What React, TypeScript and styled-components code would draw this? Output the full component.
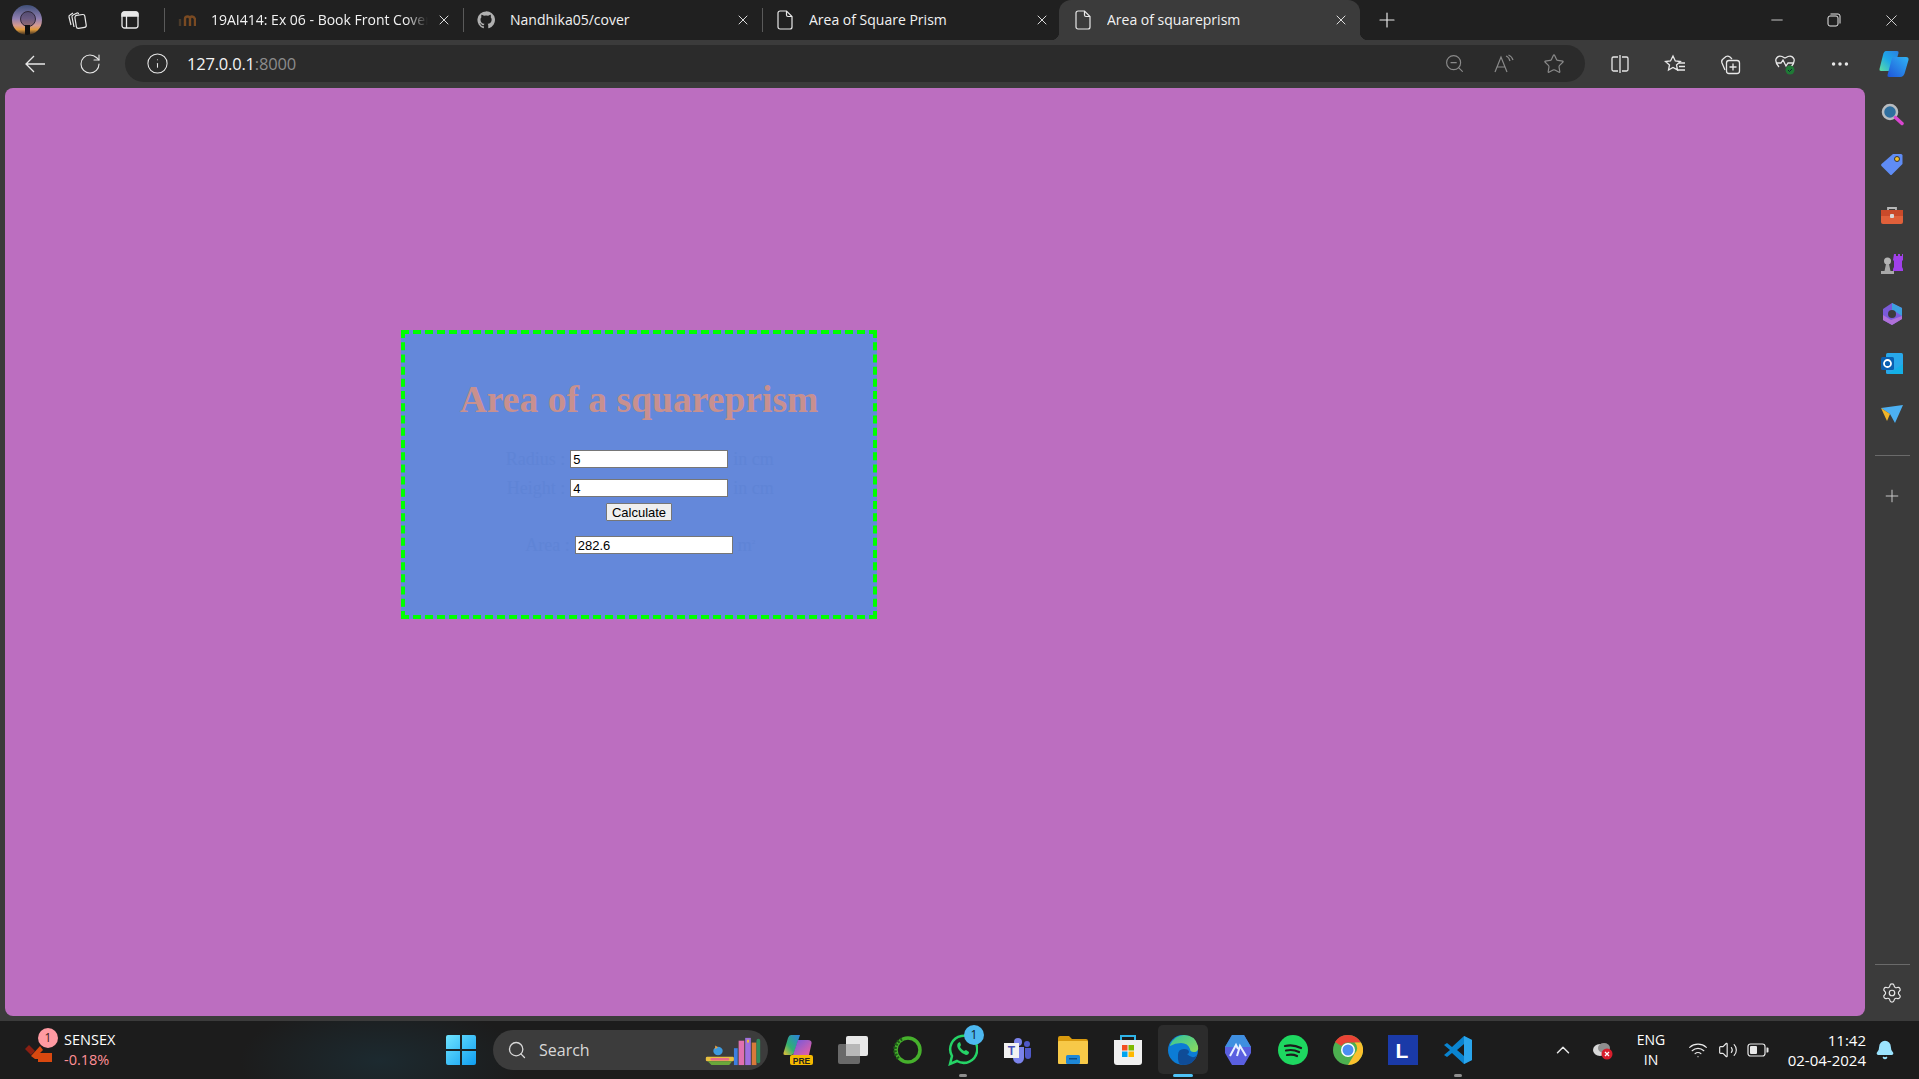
import React from 'react';
import styled, { createGlobalStyle } from 'styled-components';
import {
  Bell,
  ChevronUp,
  Info,
  Minus,
  MoreHorizontal,
  Plus,
  RotateCw,
  Search,
  Settings,
  Star,
  Volume2,
  Wifi,
  X,
  ZoomOut,
} from 'lucide-react';

const GlobalStyle = createGlobalStyle`
  html, body { margin: 0; padding: 0; height: 100%; overflow: hidden; }
  body { font-family: "Open Sans", "Noto Sans", sans-serif; background: #3b3b3b; color: #fff; }
`;

const Screen = styled.div`
  display: flex;
  flex-direction: column;
  width: 1919px;
  height: 1079px;
  overflow: hidden;
`;

/* ---- title bar ---- */
const TabStrip = styled.div`
  display: flex;
  align-items: center;
  height: 40px;
  flex: none;
  padding-left: 3px;
  background: #202020;
`;

const Slot = styled.div<{ $w: number; $h?: number; $color?: string }>`
  flex: none;
  display: flex;
  align-items: center;
  justify-content: center;
  width: ${p => p.$w}px;
  height: ${p => p.$h ?? 40}px;
  color: ${p => p.$color ?? '#e8e8e8'};
`;

const Avatar = styled.div`
  position: relative;
  width: 30px;
  height: 30px;
  border-radius: 50%;
  overflow: hidden;
  background: linear-gradient(#3f4f78 0%, #8f7fb0 45%, #d49a92 68%, #e09a3c 82%, #2c2420 100%);
`;

const AvatarHead = styled.div`
  position: absolute;
  left: 8px;
  top: 6px;
  width: 14px;
  height: 14px;
  border-radius: 50%;
  border: 1px solid #30283a;
  background: rgba(60, 45, 70, 0.45);
`;

const AvatarBody = styled.div`
  position: absolute;
  left: 13px;
  top: 20px;
  width: 5px;
  height: 10px;
  background: #111;
`;

const Separator = styled.div<{ $gap?: number }>`
  flex: none;
  width: 1px;
  height: 24px;
  margin-left: ${p => p.$gap ?? 0}px;
  background: #5a5a5a;
`;

const Tab = styled.div<{ $active?: boolean }>`
  position: relative;
  flex: none;
  display: flex;
  align-items: center;
  height: 40px;
  width: ${p => (p.$active ? 301 : 298)}px;
  margin-left: ${p => (p.$active ? -2 : 0)}px;
  padding: 0 11px 0 ${p => (p.$active ? 15 : 13)}px;
  box-sizing: border-box;
  background: ${p => (p.$active ? '#3b3b3b' : 'transparent')};
  border-radius: ${p => (p.$active ? '12px 12px 0 0' : '0')};
  ${p =>
    p.$active &&
    `
    &::before, &::after {
      content: "";
      position: absolute;
      bottom: 0;
      width: 8px;
      height: 8px;
    }
    &::before { left: -8px; background: radial-gradient(circle at 0 0, #202020 8px, #3b3b3b 8.5px); }
    &::after { right: -8px; background: radial-gradient(circle at 100% 0, #202020 8px, #3b3b3b 8.5px); }
  `}
`;

const Favicon = styled.div`
  flex: none;
  width: 18px;
  height: 20px;
  display: flex;
  align-items: center;
  justify-content: center;
  margin-right: 15px;
`;

const TabTitle = styled.div<{ $fade?: boolean }>`
  flex: 1;
  min-width: 0;
  font-size: 14px;
  line-height: 18px;
  color: #f2f2f2;
  white-space: nowrap;
  overflow: hidden;
  ${p => p.$fade && 'mask-image: linear-gradient(to right, #000 90%, transparent 100%);'}
`;

const TabClose = styled.div`
  flex: none;
  display: flex;
  margin-left: 8px;
  color: #e8e8e8;
`;

const WindowControls = styled.div`
  display: flex;
  margin-left: auto;
`;

/* ---- address bar ---- */
const Toolbar = styled.div`
  display: flex;
  align-items: flex-start;
  flex: none;
  height: 48px;
  padding-left: 7px;
  background: #3b3b3b;
  overflow: hidden;
`;

const AddressPill = styled.div`
  flex: none;
  display: flex;
  align-items: center;
  width: 1460px;
  height: 37px;
  margin: 5px 7px 0 8px;
  padding: 0 6px 0 21px;
  box-sizing: border-box;
  border-radius: 19px;
  background: #2b2b2b;
`;

const Url = styled.div`
  margin-left: 18px;
  font-size: 16.5px;
  letter-spacing: -0.2px;
  color: #f4f4f4;
  span { color: #8c8c8c; }
`;

const PillActions = styled.div`
  display: flex;
  margin-left: auto;
`;

/* ---- main area ---- */
const Main = styled.div`
  display: flex;
  flex: 1;
  min-height: 0;
`;

const Page = styled.main`
  flex: none;
  width: 1860px;
  margin: 0 0 5px 5px;
  padding: 242px 0 0 396px;
  box-sizing: border-box;
  border-radius: 8px;
  background: #bc6ec0;
`;

const Card = styled.section`
  width: 476px;
  height: 289px;
  box-sizing: border-box;
  border: 4px dashed #00ff00;
  background: #6488da;
`;

const Heading = styled.h1`
  margin: 43px 0 0;
  font: bold 37.6px/46px "Liberation Serif", "Times New Roman", serif;
  text-align: center;
  color: #c8908f;
`;

const Field = styled.div<{ $top: number }>`
  display: flex;
  justify-content: center;
  align-items: center;
  gap: 5px;
  margin-top: ${p => p.$top}px;
  height: 18px;
`;

const FieldLabel = styled.label<{ $w?: number }>`
  font: 18px "Liberation Serif", "Times New Roman", serif;
  white-space: nowrap;
  color: #5f84d6;
  text-align: right;
  ${p => p.$w && `width: ${p.$w}px;`}
  sup { font-size: 7px; line-height: 0; }
`;

const TextInput = styled.input`
  width: 158px;
  height: 18px;
  padding: 0 2px;
  box-sizing: border-box;
  border: 1px solid #767676;
  background: #fff;
  color: #000;
  font: 13px "Liberation Sans", Arial, sans-serif;
  outline: none;
`;

const ButtonRow = styled.div`
  display: flex;
  justify-content: center;
  margin-top: 6px;
`;

const CalcButton = styled.button`
  width: 66px;
  height: 18px;
  padding: 0;
  border: 1px solid #767676;
  border-radius: 1px;
  background: #efefef;
  color: #000;
  font: 13px "Liberation Sans", Arial, sans-serif;
`;

/* ---- sidebar ---- */
const Sidebar = styled.aside`
  flex: 1;
  display: flex;
  flex-direction: column;
  align-items: center;
  padding: 1px 0 15px;
`;

const SideDivider = styled.div<{ $auto?: boolean }>`
  flex: none;
  width: 35px;
  height: 1px;
  margin: 16px 0 15px;
  ${p => p.$auto && 'margin-top: auto;'}
  background: #6a6a6a;
`;

/* ---- taskbar ---- */
const Taskbar = styled.footer`
  display: flex;
  align-items: center;
  flex: none;
  height: 58px;
  background: radial-gradient(ellipse 140px 60px at 380px 40px, #1c2a30 0%, transparent 100%), #1c1c1c;
`;

const Widget = styled.div`
  position: relative;
  flex: none;
  display: flex;
  align-items: center;
  width: 436px;
  height: 58px;
  padding-left: 24px;
  box-sizing: border-box;
`;

const WidgetBadge = styled.div`
  position: absolute;
  left: 38px;
  top: 7px;
  width: 20px;
  height: 20px;
  border-radius: 50%;
  background: #ff9aa2;
  color: #3a1c1c;
  font-size: 12px;
  line-height: 20px;
  text-align: center;
`;

const WidgetText = styled.div`
  margin: -1px 0 0 10px;
  font-size: 14.5px;
  line-height: 20px;
`;

const WidgetDelta = styled.div`
  color: #ff8f96;
`;

const SearchBox = styled.div`
  position: relative;
  flex: none;
  display: flex;
  align-items: center;
  width: 275px;
  height: 40px;
  margin-left: 7px;
  padding-left: 14px;
  box-sizing: border-box;
  border-radius: 20px;
  background: #3c3c3c;
  color: #d8d8d8;
  font-size: 16px;
  gap: 12px;
`;

const SearchArt = styled.div`
  position: absolute;
  right: 3px;
  top: 6px;
  display: flex;
`;

const Apps = styled.div`
  display: flex;
  margin-left: 2px;
`;

const AppSlot = styled.div<{ $active?: boolean }>`
  position: relative;
  flex: none;
  display: flex;
  align-items: center;
  justify-content: center;
  width: 55px;
  height: 58px;
  &::before {
    content: "";
    display: ${p => (p.$active ? 'block' : 'none')};
    position: absolute;
    left: 3px;
    right: 2px;
    top: 4px;
    bottom: 5px;
    border-radius: 5px;
    background: #2c2c2c;
  }
  svg { position: relative; }
`;

const RunDot = styled.div<{ $active?: boolean }>`
  position: absolute;
  bottom: 2px;
  left: 50%;
  height: 3px;
  border-radius: 2px;
  width: ${p => (p.$active ? 20 : 8)}px;
  margin-left: ${p => (p.$active ? -10 : -4)}px;
  background: ${p => (p.$active ? '#4fc3f7' : '#8e8e8e')};
`;

const AppBadge = styled.div`
  position: absolute;
  left: 29px;
  top: 4px;
  width: 20px;
  height: 20px;
  border-radius: 50%;
  background: #4db8f0;
  color: #10222e;
  font-size: 12px;
  line-height: 20px;
  text-align: center;
`;

const Tray = styled.div`
  display: flex;
  align-items: center;
  margin-left: auto;
  padding-right: 24px;
`;

const Lang = styled.div`
  width: 56px;
  margin-right: 4px;
  font-size: 14px;
  line-height: 20px;
  text-align: center;
`;

const Clock = styled.div`
  width: 93px;
  margin-right: 9px;
  font-size: 15px;
  line-height: 20px;
  text-align: right;
  white-space: nowrap;
`;

/* ---- drawn icons ---- */
const Workspaces = () => (
  <svg width="22" height="22" viewBox="0 0 22 22" fill="none" stroke="#e8e8e8" strokeWidth="1.2">
    <path d="M5 16 3 8q-.3-1.5 1-2l3-2" />
    <path d="M8 18 6 8q-.3-1.5 1-2l4-2q1.2-.4 1.6 1" />
    <rect x="9.5" y="6" width="10" height="13" rx="2" transform="rotate(-9 14 12)" />
  </svg>
);

const VerticalTabs = () => (
  <svg width="20" height="20" viewBox="0 0 20 20" fill="none" stroke="#e8e8e8" strokeWidth="1.3">
    <rect x="2" y="2" width="16" height="16" rx="2.5" />
    <path d="M2 5.5V4.5A2.5 2.5 0 0 1 4.5 2h11A2.5 2.5 0 0 1 18 4.5V6H2Z" fill="#e8e8e8" />
    <path d="M6.5 6v12" />
  </svg>
);

const MoodleIcon = () => (
  <svg width="18" height="14" viewBox="0 0 18 14" fill="none" stroke="#7a4a22" strokeWidth="2.4">
    <path d="M7 13V6q0-2.5 2.5-2.5T12 6v7M12 6q0-2.5 2-2.5T17 6v7" />
    <path d="M2 13V6" stroke="#4a3a2a" />
  </svg>
);

const GithubMark = () => (
  <svg width="20" height="20" viewBox="0 0 24 24" fill="#b0b0b0">
    <path d="M12 .5a11.5 11.5 0 0 0-3.6 22.4c.6.1.8-.2.8-.6v-2c-3.2.7-3.9-1.500-3.900-1.500-.5-1.300-1.300-1.700-1.300-1.700-1-.7.100-.7.100-.7 1.200.1 1.800 1.200 1.800 1.200 1 1.800 2.700 1.300 3.400 1 .1-.8.400-1.300.700-1.600-2.600-.3-5.300-1.300-5.300-5.700 0-1.300.4-2.300 1.200-3.100-.1-.3-.5-1.500.1-3.100 0 0 1-.3 3.200 1.200a11 11 0 0 1 5.800 0c2.200-1.500 3.200-1.200 3.200-1.200.6 1.600.2 2.800.1 3.100.7.800 1.200 1.800 1.200 3.100 0 4.400-2.700 5.400-5.300 5.700.4.400.8 1.100.8 2.200v3.200c0 .3.200.7.800.6A11.500 11.500 0 0 0 12 .5Z" />
  </svg>
);

const PageIcon = () => (
  <svg width="16" height="20" viewBox="0 0 16 20" fill="none" stroke="#e8e8e8" strokeWidth="1.2">
    <path d="M3 1h6.500L15 6.500V17a2 2 0 0 1-2 2H3a2 2 0 0 1-2-2V3a2 2 0 0 1 2-2Z" />
    <path d="M9.500 1v4a1.500 1.500 0 0 0 1.500 1.500h4" />
  </svg>
);

const RestoreIcon = () => (
  <svg width="14" height="14" viewBox="0 0 14 14" fill="none" stroke="#e8e8e8" strokeWidth="1">
    <rect x="1" y="3" width="10" height="10" rx="2" />
    <path d="M3.500 1H11a2 2 0 0 1 2 2v7.500" />
  </svg>
);

const BackArrow = () => (
  <svg width="22" height="20" viewBox="0 0 22 20" fill="none" stroke="#e8e8e8" strokeWidth="1.3">
    <path d="M21 10H2M10 2l-8 8 8 8" />
  </svg>
);

const ReadAloud = () => (
  <svg width="22" height="20" viewBox="0 0 22 20" fill="none" stroke="#8a8a8a" strokeWidth="1.200">
    <path d="M2 18 8 3l6 15M4.500 13h7" />
    <path d="M13 2q3 1 4 5M15.500 1q3.500 1.500 4.500 5" />
  </svg>
);

const SplitIcon = () => (
  <svg width="20" height="20" viewBox="0 0 20 20" fill="none" stroke="#e8e8e8" strokeWidth="1.300">
    <path d="M8 3H3.500A1.500 1.500 0 0 0 2 4.500v11A1.500 1.500 0 0 0 3.500 17H8M12 3h4.500A1.500 1.500 0 0 1 18 4.500v11a1.500 1.500 0 0 1-1.500 1.500H12M10 1v18" />
  </svg>
);

const FavoritesIcon = () => (
  <svg width="22" height="20" viewBox="0 0 22 20" fill="none" stroke="#e8e8e8" strokeWidth="1.300">
    <path d="M9 2l2.300 5 5 .500-3.800 3.400 1 5-4.500-2.500L4.500 16l1-5L1.500 7.500l5-.500Z" />
    <path d="M15 9h6M15 12.500h6M13 16h8" />
  </svg>
);

const CollectionsIcon = () => (
  <svg width="22" height="22" viewBox="0 0 22 22" fill="none" stroke="#e8e8e8" strokeWidth="1.300">
    <path d="M6 17 3 10q-1-2.500 1-4l3-2.500q2-1 4 .5l2 2" />
    <rect x="7.500" y="7.500" width="13" height="13" rx="2.500" />
    <path d="M14 10.500v7M10.500 14h7" />
  </svg>
);

const HealthIcon = () => (
  <svg width="22" height="22" viewBox="0 0 22 22" fill="none">
    <path d="M5 14Q1 10 2 6q2-4 6-2.500L11 5l3-1.500q4-1.500 6 2.500 1 4-3 8" stroke="#e8e8e8" strokeWidth="1.300" />
    <path d="M2 10h5l2-3 3 6 2-3h6" stroke="#e8e8e8" strokeWidth="1.300" />
    <circle cx="16" cy="17" r="4.500" fill="#1f7a36" />
    <path d="M14 17l1.500 1.500 2.500-2.500" stroke="#123" strokeWidth="1" />
  </svg>
);

const CopilotIcon = () => (
  <svg width="30" height="28" viewBox="0 0 30 28">
    <defs>
      <linearGradient id="cpA" x1="0" y1="1" x2="1" y2="0">
        <stop offset="0" stopColor="#5fe0a0" />
        <stop offset="0.5" stopColor="#1ea7e8" />
        <stop offset="1" stopColor="#2b7fe0" />
      </linearGradient>
      <linearGradient id="cpB" x1="0" y1="1" x2="1" y2="0">
        <stop offset="0" stopColor="#1f55d8" />
        <stop offset="1" stopColor="#30b4f4" />
      </linearGradient>
    </defs>
    <path d="M7 1h11q2 0 1.500 2L15 19q-.7 2-3 2H2q-2 0-1.500-2L4 5q1-4 3-4Z" fill="url(#cpA)" />
    <path d="M16 7h11q3 0 2.500 3L26 22q-1 5-5 5H10q-2 0-1.500-2l4-15q.7-3 3.500-3Z" fill="url(#cpB)" />
  </svg>
);

const SideSearch = () => (
  <svg width="24" height="24" viewBox="0 0 24 24" fill="none">
    <circle cx="10" cy="10" r="7" fill="#2f6f9f" stroke="#b8bcc0" strokeWidth="2.500" />
    <path d="M15.500 15.500 22 21.500" stroke="#d946d0" strokeWidth="3.500" strokeLinecap="round" />
  </svg>
);

const SideTag = () => (
  <svg width="24" height="24" viewBox="0 0 24 24">
    <path d="M13 2h8a1.500 1.500 0 0 1 1.500 1.500V12L12 22.500q-1 1-2 0L1.500 14q-1-1 0-2Z" fill="#5f8cf5" />
    <circle cx="17" cy="7" r="2.500" fill="#f0c030" stroke="#333" />
  </svg>
);

const SideToolbox = () => (
  <svg width="24" height="24" viewBox="0 -2 24 24">
    <path d="M8 7V4h8v3" fill="none" stroke="#b8b8b8" strokeWidth="1.800" />
    <rect x="1" y="6" width="22" height="14" rx="2" fill="#e0603a" />
    <rect x="1" y="6" width="22" height="6" fill="#c94a2a" />
    <rect x="10" y="10" width="4" height="4" rx="1" fill="#d8d8d8" />
  </svg>
);

const SideChess = () => (
  <svg width="24" height="24" viewBox="0 0 24 24">
    <path d="M14 2h2v2h2V2h2v2h2V2h1v6l-1 1v6l1 2v2H13v-2l1-2V9l-1-1Z" fill="#a040ea" />
    <circle cx="7.500" cy="9" r="3.500" fill="#b4b4b4" />
    <path d="M6 12h3l1.500 7H14v3H1v-3h3.500Z" fill="#a8a8a8" />
  </svg>
);

const SideM365 = () => (
  <svg width="24" height="24" viewBox="0 0 24 24" fill="none">
    <path d="M12 1 22 6v11l-10 6L3 18V7Z" fill="#7a5ad8" />
    <path d="M12 1 22 6v8l-6-4-4-2Z" fill="#3ca0e0" />
    <path d="M3 13l8 5 11-4v3l-10 6-9-5Z" fill="#b070d8" />
    <circle cx="12" cy="12" r="4" fill="#3b3b3b" />
  </svg>
);

const SideOutlook = () => (
  <svg width="24" height="24" viewBox="0 0 24 24">
    <rect x="6" y="1" width="17" height="21" rx="1.500" fill="#28a8ea" />
    <path d="M8 22 23 12v10Z" fill="#14b0e6" />
    <rect x="1" y="5" width="13" height="13" rx="1.500" fill="#0a5fb0" />
    <circle cx="7.500" cy="11.500" r="3.500" fill="none" stroke="#fff" strokeWidth="1.800" />
  </svg>
);

const SideSend = () => (
  <svg width="24" height="20" viewBox="0 0 24 20">
    <path d="M1 4 23 1 15 19 10 10Z" fill="#4cb0f2" />
    <path d="M1 4 10 10 7 17Z" fill="#f0b429" />
  </svg>
);

const Sensex = () => (
  <svg width="30" height="26" viewBox="0 0 30 26">
    <path d="M1 12 5 8l6 6-4 4Z" fill="#8a1f12" />
    <path d="M7 19 16 9l3 4-3 3h12v9H14v-3h-3Z" fill="#d9480f" />
  </svg>
);

const WindowsLogo = () => (
  <svg width="30" height="30" viewBox="0 0 30 30">
    <defs>
      <linearGradient id="winG" x1="0" y1="0" x2="1" y2="1">
        <stop offset="0" stopColor="#6fe4ff" />
        <stop offset="1" stopColor="#0f9df0" />
      </linearGradient>
    </defs>
    <path d="M0 2q0-2 2-2h12v14H0ZM16 0h12q2 0 2 2v12H16ZM0 16h14v14H2q-2 0-2-2ZM16 16h14v12q0 2-2 2H16Z" fill="url(#winG)" />
  </svg>
);

const Books = () => (
  <svg width="64" height="30" viewBox="0 0 60 32">
    <rect x="1" y="22" width="30" height="5" rx="1.500" fill="#e8c040" />
    <rect x="6" y="23.500" width="20" height="2.500" rx="1" fill="#e86a8a" />
    <path d="M3 27h26l-3 4H7Z" fill="#6aa83a" />
    <ellipse cx="14" cy="16" rx="5" ry="4.500" fill="#3d9ae0" />
    <path d="M11 10l3 2-3 2Z" fill="#e8a040" />
    <rect x="31" y="13" width="4" height="18" fill="#3d7fe0" />
    <rect x="36" y="5" width="6" height="26" fill="#e070b0" />
    <rect x="43" y="2" width="6" height="29" fill="#a070e0" />
    <rect x="45" y="4" width="2" height="3" fill="#f0c030" />
    <rect x="50" y="7" width="5" height="24" fill="#d87a3a" />
    <rect x="55" y="3" width="4" height="26" rx="2" fill="#2f8a5a" />
  </svg>
);

const CopilotPre = () => (
  <svg width="30" height="32" viewBox="0 0 30 32">
    <defs>
      <linearGradient id="preG" x1="0" y1="1" x2="1" y2="0">
        <stop offset="0" stopColor="#f0c030" />
        <stop offset="0.4" stopColor="#30b070" />
        <stop offset="1" stopColor="#2b7fe0" />
      </linearGradient>
      <linearGradient id="preH" x1="0" y1="0" x2="1" y2="1">
        <stop offset="0" stopColor="#6a5ae0" />
        <stop offset="1" stopColor="#f060a0" />
      </linearGradient>
    </defs>
    <path d="M8 1h9L11 19q-.5 2-3 2H2q-2 0-1.500-2L5 4q1-3 3-3Z" fill="url(#preG)" />
    <path d="M15 6h10q4 0 3.500 3.500L26 21H10Z" fill="url(#preH)" />
    <rect x="7" y="21" width="23" height="10" rx="2" fill="#f5b800" />
    <text x="18.500" y="29.500" fontSize="8.500" fontWeight="800" textAnchor="middle" fill="#222" fontFamily="Liberation Sans">PRE</text>
  </svg>
);

const TaskView = () => (
  <svg width="30" height="30" viewBox="0 0 30 30">
    <rect x="8" y="1" width="22" height="20" rx="2" fill="#e8e8e8" />
    <rect x="0" y="9" width="22" height="20" rx="2" fill="#6e6e6e" opacity="0.95" />
    <rect x="8" y="9" width="14" height="12" fill="#b8b8b8" />
  </svg>
);

const RingApp = () => (
  <svg width="30" height="30" viewBox="0 0 30 30" fill="none">
    <circle cx="15" cy="15" r="12" stroke="#46b02c" strokeWidth="3.500" />
    <path d="M9 4A12 12 0 0 0 6 24" stroke="#1e5a18" strokeWidth="3.500" strokeDasharray="2 1.500" />
  </svg>
);

const WhatsApp = () => (
  <svg width="30" height="32" viewBox="0 0 30 32" fill="none">
    <path d="M2 30l2-8A13.500 13.500 0 1 1 9 27Z" stroke="#25d366" strokeWidth="2.500" />
    <path d="M10 9q-2 3 1 7t7 5q3 0 3-3l-3-2-2 1q-3-2-4-4l1-2-1-3Z" fill="#25d366" />
  </svg>
);

const Teams = () => (
  <svg width="28" height="28" viewBox="0 0 28 28">
    <circle cx="14" cy="6" r="4" fill="#7b83eb" />
    <circle cx="23" cy="8" r="3" fill="#5059c9" />
    <path d="M9 11h11v11a5 5 0 0 1-11 0Z" fill="#7b83eb" />
    <path d="M21 12h6v8a3 3 0 0 1-6 0Z" fill="#5059c9" />
    <rect x="0" y="7" width="15" height="15" fill="#f2f2f2" />
    <text x="7.500" y="19" fontSize="12" fontWeight="700" textAnchor="middle" fill="#464eb8" fontFamily="Liberation Sans">T</text>
  </svg>
);

const Folder = () => (
  <svg width="30" height="28" viewBox="0 0 30 28">
    <path d="M0 2q0-2 2-2h9l3 3h14q2 0 2 2v3H0Z" fill="#d99a0e" />
    <rect x="0" y="5" width="30" height="23" rx="1" fill="#f7c948" />
    <rect x="8" y="19" width="14" height="9" rx="1.500" fill="#1e88d8" />
    <rect x="11" y="22" width="8" height="1.500" fill="#0d4f8a" />
  </svg>
);

const Store = () => (
  <svg width="30" height="32" viewBox="0 0 30 32" fill="none">
    <path d="M8 7V2h14v5" stroke="#2fb4e8" strokeWidth="2" />
    <path d="M1 6h28v22a3 3 0 0 1-3 3H4a3 3 0 0 1-3-3Z" fill="#f0f0f0" />
    <rect x="9" y="11" width="5.500" height="5.500" fill="#f25022" />
    <rect x="15.500" y="11" width="5.500" height="5.500" fill="#7fba00" />
    <rect x="9" y="17.500" width="5.500" height="5.500" fill="#00a4ef" />
    <rect x="15.500" y="17.500" width="5.500" height="5.500" fill="#ffb900" />
  </svg>
);

const Edge = () => (
  <svg width="32" height="32" viewBox="0 0 32 32">
    <defs>
      <linearGradient id="edgeG" x1="0" y1="0" x2="1" y2="1">
        <stop offset="0" stopColor="#2fc3a0" />
        <stop offset="1" stopColor="#8fdc5a" />
      </linearGradient>
    </defs>
    <circle cx="16" cy="16" r="15" fill="#0c7cd5" />
    <path d="M3 11Q8 1 17 1q11 0 14 11 1 6-4 6-4 0-4-3-2-6-9-6-6 0-11 3Z" fill="url(#edgeG)" />
    <path d="M11 21q0-6 6-6 5 0 5 3 0 2-2 2 6 6 10 1-3 10-14 10Q10 31 11 21Z" fill="#0f4c97" />
  </svg>
);

const Hexa = () => (
  <svg width="28" height="32" viewBox="0 0 28 32" fill="none">
    <path d="M8 1h12l7 12v6l-7 12H8L1 19v-6Z" fill="#5a5fe0" />
    <path d="M8 1h12l7 12H1Z" fill="#3f8fe0" />
    <path d="M6 22l6-11 2 4M13 22l3-10 6 10" stroke="#e8f0ff" strokeWidth="2" />
  </svg>
);

const Spotify = () => (
  <svg width="30" height="30" viewBox="0 0 30 30" fill="none">
    <circle cx="15" cy="15" r="15" fill="#1ed760" />
    <path d="M7 11q8-2 16 2M8 15.500q7-1.500 13 1.500M9 20q6-1 10 1" stroke="#1c1c1c" strokeWidth="2.200" strokeLinecap="round" />
  </svg>
);

const Chrome = () => (
  <svg width="30" height="30" viewBox="0 0 30 30">
    <circle cx="15" cy="15" r="15" fill="#4caf50" />
    <path d="M15 0a15 15 0 0 1 13 7.500H15A7.500 7.500 0 0 0 8.500 11L2 7A15 15 0 0 1 15 0Z" fill="#ea4335" />
    <path d="M28 7.500A15 15 0 0 1 15 30l6.500-11a7.500 7.500 0 0 0 0-11.500Z" fill="#fbc02d" />
    <circle cx="15" cy="15" r="7" fill="#fff" />
    <circle cx="15" cy="15" r="5.500" fill="#4a8ef0" />
  </svg>
);

const LApp = () => (
  <svg width="30" height="30" viewBox="0 0 30 30">
    <rect width="30" height="30" fill="#1a3aa8" />
    <text x="14" y="23" fontSize="21" fontWeight="700" textAnchor="middle" fill="#fff" fontFamily="Liberation Sans">L</text>
  </svg>
);

const VSCode = () => (
  <svg width="30" height="30" viewBox="0 0 30 30">
    <path d="M21 1 29 5v20l-8 4-12-11-5 4-3-2 6-5-6-5 3-2 5 4Zm0 8-7 6 7 6Z" fill="#0a84d0" />
    <path d="M21 1 29 5v20l-8 4Z" fill="#2aa5ec" />
  </svg>
);

const CloudOff = () => (
  <svg width="22" height="20" viewBox="0 0 22 20">
    <ellipse cx="8" cy="10" rx="7" ry="6" fill="#d8d8d8" />
    <ellipse cx="12" cy="8" rx="6" ry="5" fill="#8f8f8f" />
    <circle cx="15" cy="14" r="5.500" fill="#d81e2c" />
    <path d="M13 12l4 4M17 12l-4 4" stroke="#fff" strokeWidth="1.300" />
  </svg>
);

const BatteryIcon = () => (
  <svg width="22" height="14" viewBox="0 0 22 14" fill="none">
    <rect x="1" y="1" width="17" height="12" rx="2.500" stroke="#e8e8e8" strokeWidth="1.200" />
    <rect x="3" y="3" width="7" height="8" rx="1" fill="#e8e8e8" />
    <path d="M19.500 4.500h1q1 0 1 1v3q0 1-1 1h-1Z" fill="#e8e8e8" />
  </svg>
);

const apps = [
  { icon: <CopilotPre /> },
  { icon: <TaskView /> },
  { icon: <RingApp /> },
  { icon: <WhatsApp />, badge: '1', dot: true },
  { icon: <Teams /> },
  { icon: <Folder /> },
  { icon: <Store /> },
  { icon: <Edge />, active: true },
  { icon: <Hexa /> },
  { icon: <Spotify /> },
  { icon: <Chrome /> },
  { icon: <LApp /> },
  { icon: <VSCode />, dot: true },
];

const sideIcons = [
  <SideSearch />,
  <SideTag />,
  <SideToolbox />,
  <SideChess />,
  <SideM365 />,
  <SideOutlook />,
  <SideSend />,
];

const closeIcon = <X size={16} strokeWidth={1.4} />;

const App = () => (
  <Screen>
    <GlobalStyle />

    <TabStrip>
      <Slot $w={48}>
        <Avatar>
          <AvatarHead />
          <AvatarBody />
        </Avatar>
      </Slot>
      <Slot $w={52}><Workspaces /></Slot>
      <Slot $w={53}><VerticalTabs /></Slot>
      <Separator $gap={8} />

      <Tab>
        <Favicon><MoodleIcon /></Favicon>
        <TabTitle $fade>19AI414: Ex 06 - Book Front Cover</TabTitle>
        <TabClose>{closeIcon}</TabClose>
      </Tab>
      <Separator />
      <Tab>
        <Favicon><GithubMark /></Favicon>
        <TabTitle>Nandhika05/cover</TabTitle>
        <TabClose>{closeIcon}</TabClose>
      </Tab>
      <Separator />
      <Tab>
        <Favicon><PageIcon /></Favicon>
        <TabTitle>Area of Square Prism</TabTitle>
        <TabClose>{closeIcon}</TabClose>
      </Tab>
      <Tab $active>
        <Favicon><PageIcon /></Favicon>
        <TabTitle>Area of squareprism</TabTitle>
        <TabClose>{closeIcon}</TabClose>
      </Tab>
      <Slot $w={54}><Plus size={24} strokeWidth={1.2} /></Slot>

      <WindowControls>
        <Slot $w={56}><Minus size={18} strokeWidth={1.1} /></Slot>
        <Slot $w={58}><RestoreIcon /></Slot>
        <Slot $w={56}><X size={19} strokeWidth={1.1} /></Slot>
      </WindowControls>
    </TabStrip>

    <Toolbar>
      <Slot $w={55} $h={47}><BackArrow /></Slot>
      <Slot $w={55} $h={47}><RotateCw size={24} strokeWidth={1.1} /></Slot>
      <AddressPill>
        <Info size={23} strokeWidth={1.1} color="#e8e8e8" />
        <Url>127.0.0.1<span>:8000</span></Url>
        <PillActions>
          <Slot $w={50} $h={37} $color="#8a8a8a"><ZoomOut size={21} strokeWidth={1.3} /></Slot>
          <Slot $w={50} $h={37}><ReadAloud /></Slot>
          <Slot $w={50} $h={37} $color="#8a8a8a"><Star size={22} strokeWidth={1.3} /></Slot>
        </PillActions>
      </AddressPill>
      <Slot $w={55} $h={47}><SplitIcon /></Slot>
      <Slot $w={55} $h={47}><FavoritesIcon /></Slot>
      <Slot $w={55} $h={47}><CollectionsIcon /></Slot>
      <Slot $w={55} $h={47}><HealthIcon /></Slot>
      <Slot $w={55} $h={47}><MoreHorizontal size={22} strokeWidth={1.8} /></Slot>
      <Slot $w={53} $h={47}><CopilotIcon /></Slot>
    </Toolbar>

    <Main>
      <Page>
        <Card>
          <Heading>Area of a squareprism</Heading>
          <Field $top={27}>
            <FieldLabel $w={61}>Radius :</FieldLabel>
            <TextInput readOnly value="5" />
            <FieldLabel>in cm</FieldLabel>
          </Field>
          <Field $top={11}>
            <FieldLabel $w={61}>Height :</FieldLabel>
            <TextInput readOnly value="4" />
            <FieldLabel>in cm</FieldLabel>
          </Field>
          <ButtonRow>
            <CalcButton>Calculate</CalcButton>
          </ButtonRow>
          <Field $top={15}>
            <FieldLabel $w={47}>Area :</FieldLabel>
            <TextInput readOnly value="282.6" />
            <FieldLabel>m<sup>2</sup></FieldLabel>
          </Field>
        </Card>
      </Page>

      <Sidebar>
        {sideIcons.map((icon, i) => (
          <Slot key={i} $w={54} $h={50}>{icon}</Slot>
        ))}
        <SideDivider />
        <Slot $w={54} $h={50}><Plus size={20} strokeWidth={1.2} color="#c8c8c8" /></Slot>
        <SideDivider $auto />
        <Slot $w={54} $h={26}><Settings size={22} strokeWidth={1.3} /></Slot>
      </Sidebar>
    </Main>

    <Taskbar>
      <Widget>
        <Sensex />
        <WidgetBadge>1</WidgetBadge>
        <WidgetText>
          SENSEX
          <WidgetDelta>-0.18%</WidgetDelta>
        </WidgetText>
      </Widget>
      <Slot $w={50} $h={58}><WindowsLogo /></Slot>
      <SearchBox>
        <Search size={20} strokeWidth={1.6} />
        Search
        <SearchArt><Books /></SearchArt>
      </SearchBox>
      <Apps>
        {apps.map((app, i) => (
          <AppSlot key={i} $active={app.active}>
            {app.icon}
            {app.badge && <AppBadge>{app.badge}</AppBadge>}
            {(app.dot || app.active) && <RunDot $active={app.active} />}
          </AppSlot>
        ))}
      </Apps>
      <Tray>
        <Slot $w={40} $h={58}><ChevronUp size={22} strokeWidth={1.6} /></Slot>
        <Slot $w={40} $h={58}><CloudOff /></Slot>
        <Lang>ENG<br />IN</Lang>
        <Slot $w={30} $h={58}><Wifi size={20} strokeWidth={1.4} /></Slot>
        <Slot $w={30} $h={58}><Volume2 size={20} strokeWidth={1.4} /></Slot>
        <Slot $w={30} $h={58}><BatteryIcon /></Slot>
        <Clock>11:42<br />02-04-2024</Clock>
        <Bell size={20} fill="#9be4ff" color="#9be4ff" />
      </Tray>
    </Taskbar>
  </Screen>
);

export default App;
